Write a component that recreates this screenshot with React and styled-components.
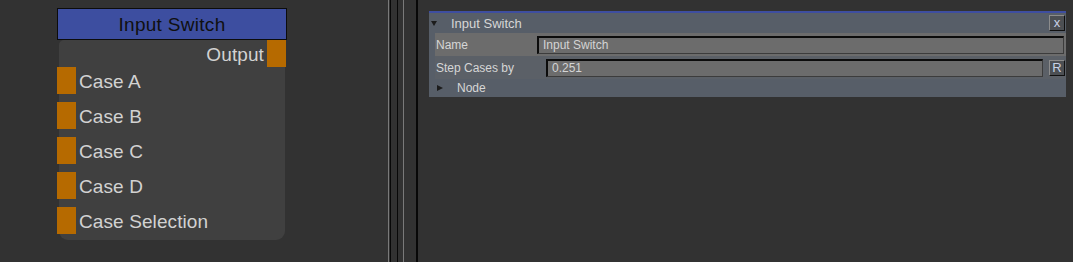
import React from 'react'
import styled, { createGlobalStyle } from 'styled-components'

const GlobalStyle = createGlobalStyle`
  html, body {
    margin: 0;
    padding: 0;
    background: #323232;
  }
  body {
    font-family: "Liberation Sans", Arial, sans-serif;
  }
`

const Page = styled.div`
  display: flex;
  width: 1073px;
  height: 262px;
  background: #323232;
  overflow: hidden;
`

const Canvas = styled.section`
  width: 388px;
  flex: none;
  padding: 8px 0 0 57px;
  box-sizing: border-box;
`

const Splitter = styled.div`
  width: 30px;
  flex: none;
  background: linear-gradient(
    to right,
    #7a7a7a 0 1px,
    #323232 1px 2px,
    #080808 2px 3px,
    #323232 3px 9px,
    #080808 9px 10px,
    #323232 10px 15px,
    #7a7a7a 15px 16px,
    #323232 16px 28px,
    #080808 28px 30px
  );
`

const Node = styled.div`
  width: 230px;
  display: flex;
  flex-direction: column;
`

const NodeTitle = styled.div`
  height: 30px;
  border: 1px solid #0c0c0c;
  background: #3d4ea0;
  color: #101010;
  font-size: 19px;
  letter-spacing: 0.3px;
  line-height: 31px;
  text-align: center;
`

const NodeBody = styled.div`
  margin: 0 2px;
  height: 200px;
  background: #404040;
  border-radius: 5px 0 9px 9px;
  display: flex;
  flex-direction: column;
  gap: 8px;
`

const OutputRow = styled.div`
  display: flex;
  justify-content: flex-end;
  align-items: center;
  height: 27px;
  margin-right: -1px;
  margin-bottom: -8px;
`

const InputRow = styled.div`
  display: flex;
  align-items: center;
  height: 27px;
  margin-left: -2px;
`

const Port = styled.span`
  width: 19px;
  height: 27px;
  background: #b66a00;
  flex: none;
`

const PortLabel = styled.span`
  color: #d2d2d2;
  font-size: 19px;
  letter-spacing: 0.1px;
  padding-top: 2px;
  margin: ${({ $out }) => ($out ? '0 3px 0 0' : '0 0 0 3px')};
`

const Props = styled.section`
  flex: 1;
  padding: 11px 7px 0 11px;
`

const Panel = styled.div`
  border-top: 2px solid #3e4ea0;
  background: #575e68;
  height: 84px;
  display: flex;
  flex-direction: column;
  color: #d6d6d6;
`

const Header = styled.div`
  display: flex;
  align-items: center;
  height: 20px;
  padding-left: 2px;
  font-size: 13px;
`

const Caret = styled.span`
  width: 0;
  height: 0;
  flex: none;
  border-style: solid;
  ${({ $open }) =>
    $open
      ? 'border-width: 5px 3.5px 0 3.5px; border-color: #1c1c1c transparent transparent transparent;'
      : 'border-width: 3.5px 0 3.5px 6px; border-color: transparent transparent transparent #1c1c1c;'}
`

const HeaderTitle = styled.span`
  margin-left: 14px;
  flex: 1;
`

const SmallButton = styled.span`
  width: 14px;
  height: 14px;
  flex: none;
  box-sizing: content-box;
  border-top: 1px solid #8c8c8c;
  border-left: 1px solid #8c8c8c;
  border-right: 1px solid #101010;
  border-bottom: 1px solid #101010;
  background: #4c4f53;
  color: #c8d2e6;
  font-size: 13px;
  line-height: 14px;
  text-align: center;
  margin-right: 1px;
`

const Row = styled.div`
  display: flex;
  align-items: center;
  height: ${({ $h }) => $h}px;
  margin-left: 6px;
  background: ${({ $bg }) => $bg || 'transparent'};
  font-size: 12px;
`

const Label = styled.span`
  width: ${({ $w }) => $w}px;
  flex: none;
  padding-left: 1px;
  box-sizing: border-box;
`

const Field = styled.div`
  flex: 1;
  height: 18px;
  box-sizing: border-box;
  border-top: 2px solid #0c0c0c;
  border-left: 2px solid #0c0c0c;
  border-right: 1px solid #3c3c3c;
  border-bottom: 1px solid #3c3c3c;
  background: #6c6c6c;
  color: #d4d4d4;
  font-size: 12px;
  line-height: 15px;
  padding-left: 4px;
  margin-right: ${({ $mr }) => $mr}px;
`

const NodeRow = styled.div`
  display: flex;
  align-items: center;
  height: 18px;
  padding-left: 8px;
  font-size: 12px;
`

const inputs = ['Case A', 'Case B', 'Case C', 'Case D', 'Case Selection']

export default function App() {
  return (
    <Page>
      <GlobalStyle />
      <Canvas>
        <Node>
          <NodeTitle>Input Switch</NodeTitle>
          <NodeBody>
            <OutputRow>
              <PortLabel $out>Output</PortLabel>
              <Port />
            </OutputRow>
            {inputs.map((name) => (
              <InputRow key={name}>
                <Port />
                <PortLabel>{name}</PortLabel>
              </InputRow>
            ))}
          </NodeBody>
        </Node>
      </Canvas>
      <Splitter />
      <Props>
        <Panel>
          <Header>
            <Caret $open />
            <HeaderTitle>Input Switch</HeaderTitle>
            <SmallButton>x</SmallButton>
          </Header>
          <Row $h={23} $bg="#6c6c6c">
            <Label $w={102}>Name</Label>
            <Field $mr={2}>Input Switch</Field>
          </Row>
          <Row $h={23} $bg="#5b6067">
            <Label $w={111}>Step Cases by</Label>
            <Field $mr={6}>0.251</Field>
            <SmallButton>R</SmallButton>
          </Row>
          <NodeRow>
            <Caret />
            <HeaderTitle>Node</HeaderTitle>
          </NodeRow>
        </Panel>
      </Props>
    </Page>
  )
}
